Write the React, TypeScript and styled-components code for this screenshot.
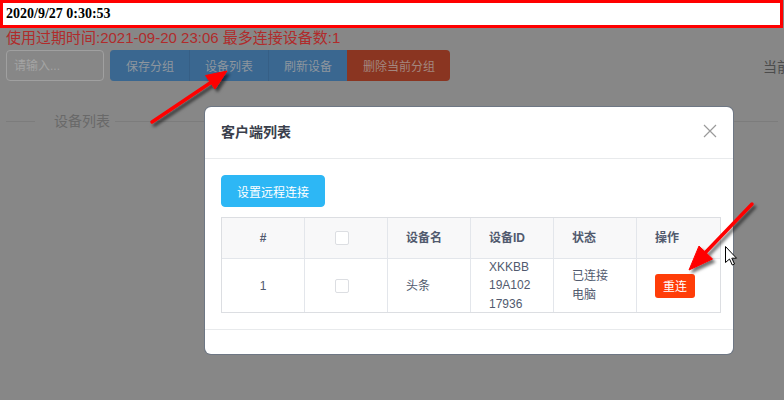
import React from "react";
import styled, { createGlobalStyle } from "styled-components";

const GlobalStyle = createGlobalStyle`
  html, body { margin: 0; padding: 0; }
  body {
    width: 784px;
    height: 400px;
    overflow: hidden;
    background: #878787;
    font-family: "Liberation Sans", "Noto Sans CJK SC", sans-serif;
  }
`;

const Page = styled.div`
  position: relative;
  width: 784px;
  height: 400px;
  overflow: hidden;
`;

const ClockBar = styled.div`
  box-sizing: border-box;
  width: 783px;
  height: 28px;
  border: 3px solid #ff0000;
  background: #ffffff;
  padding-left: 3px;
  font: bold 14px "Liberation Serif", serif;
  line-height: 22px;
  color: #000;
`;

const Main = styled.div`
  padding: 0 6px;
`;

const ExpireText = styled.div`
  font-size: 15px;
  line-height: 20px;
  color: #b02b2b;
  white-space: nowrap;
`;

const Toolbar = styled.div`
  display: flex;
  align-items: center;
  margin-top: 2px;
  height: 31px;
  white-space: nowrap;
`;

const SearchInput = styled.input`
  box-sizing: border-box;
  width: 98px;
  height: 31px;
  margin: 0 6px 0 0;
  padding: 0 7px;
  border: 1px solid #a0a0a0;
  border-radius: 4px;
  background: transparent;
  font: 12px "Liberation Sans", "Noto Sans CJK SC", sans-serif;
  outline: none;
  &::placeholder { color: #a4a4a4; }
`;

const ButtonGroup = styled.div`
  display: flex;
  height: 31px;
`;

const GroupButton = styled.button<{ $tone: "primary" | "danger" }>`
  height: 31px;
  padding: 0 15px;
  border: none;
  border-left: 1px solid ${(p) => (p.$tone === "primary" ? "#365f86" : "#8a3521")};
  background: ${(p) => (p.$tone === "primary" ? "#3a6790" : "#8a3521")};
  color: ${(p) => (p.$tone === "primary" ? "#8e969e" : "#a3877f")};
  font: 12px "Liberation Sans", "Noto Sans CJK SC", sans-serif;
  &:first-child { border-radius: 4px 0 0 4px; border-left-color: #3a6790; }
  &:last-child { border-radius: 0 4px 4px 0; }
`;

const CurrentLabel = styled.span`
  margin-left: 313px;
  font-size: 14px;
  color: #4c4c4c;
`;

const Divider = styled.div`
  display: flex;
  align-items: center;
  margin-top: 30px;
  height: 20px;
  font-size: 14px;
  line-height: 20px;
  color: #696969;
  white-space: nowrap;
`;

const DividerLine = styled.span<{ $grow?: boolean }>`
  display: block;
  height: 0;
  border-top: 1px solid #7c7c7c;
  ${(p) => (p.$grow ? "flex: 1;" : "width: 29px;")}
`;

const DividerText = styled.span`
  margin: 0 5px 0 19px;
`;

const Modal = styled.div`
  position: absolute;
  left: 205px;
  top: 107px;
  width: 528px;
  background: #ffffff;
  border-radius: 6px;
  box-shadow: 0 0 0 1px #6e7784;
`;

const ModalHeader = styled.div`
  position: relative;
  padding: 15px 16px 16px;
  border-bottom: 1px solid #e8eaec;
`;

const ModalTitle = styled.div`
  font-size: 14px;
  line-height: 20px;
  font-weight: bold;
  color: #3a3f4c;
`;

const CloseIcon = styled.svg`
  position: absolute;
  right: 16px;
  top: 17px;
`;

const ModalBody = styled.div`
  padding: 16px;
`;

const InfoButton = styled.button`
  height: 32px;
  padding: 0 15px;
  border: 1px solid #2db7f5;
  border-radius: 4px;
  background: #2db7f5;
  color: #ffffff;
  font: 12px "Liberation Sans", "Noto Sans CJK SC", sans-serif;
`;

const Table = styled.div`
  box-sizing: border-box;
  width: 500px;
  margin-top: 10px;
  display: grid;
  grid-template-columns: repeat(6, 83px);
  border: 1px solid #dcdee2;
`;

const Cell = styled.div<{ $head?: boolean; $align?: "left" | "center"; $last?: boolean }>`
  box-sizing: border-box;
  display: flex;
  align-items: center;
  justify-content: ${(p) => (p.$align === "left" ? "flex-start" : "center")};
  padding: ${(p) => (p.$align === "left" ? "0 0 0 18px" : "0")};
  height: ${(p) => (p.$head ? "41px" : "53px")};
  border-right: ${(p) => (p.$last ? "none" : "1px solid #e3e6eb")};
  border-bottom: ${(p) => (p.$head ? "1px solid #e3e6eb" : "none")};
  background: ${(p) => (p.$head ? "#f8f8f9" : "#ffffff")};
  font-size: 12px;
  line-height: 18px;
  font-weight: ${(p) => (p.$head ? "bold" : "normal")};
  color: #515a6e;
`;

const Lines = styled.div`
  display: flex;
  flex-direction: column;
  line-height: 18.5px;
`;

const CheckBox = styled.span`
  box-sizing: border-box;
  display: inline-block;
  width: 14px;
  height: 14px;
  margin-right: 8px;
  border: 1px solid #dcdee2;
  border-radius: 2px;
  background: #ffffff;
`;

const SmallDangerButton = styled.button`
  height: 24px;
  padding: 0 8px;
  border: none;
  border-radius: 3px;
  background: #ff3d08;
  color: #ffffff;
  font: 12px "Liberation Sans", "Noto Sans CJK SC", sans-serif;
`;

const ModalFooter = styled.div`
  height: 24px;
  border-top: 1px solid #e8eaec;
`;

const Annotations = styled.svg`
  position: absolute;
  left: 0;
  top: 0;
  pointer-events: none;
`;

const headers = ["#", "", "设备名", "设备ID", "状态", "操作"];

export default function App() {
  return (
    <Page>
      <GlobalStyle />
      <ClockBar>2020/9/27 0:30:53</ClockBar>
      <Main>
        <ExpireText>使用过期时间:2021-09-20 23:06 最多连接设备数:1</ExpireText>
        <Toolbar>
          <SearchInput placeholder="请输入..." />
          <ButtonGroup>
            <GroupButton $tone="primary">保存分组</GroupButton>
            <GroupButton $tone="primary">设备列表</GroupButton>
            <GroupButton $tone="primary">刷新设备</GroupButton>
            <GroupButton $tone="danger">删除当前分组</GroupButton>
          </ButtonGroup>
          <CurrentLabel>当前分组：默认</CurrentLabel>
        </Toolbar>
        <Divider>
          <DividerLine />
          <DividerText>设备列表</DividerText>
          <DividerLine $grow />
        </Divider>
      </Main>

      <Modal>
        <ModalHeader>
          <ModalTitle>客户端列表</ModalTitle>
          <CloseIcon width="14" height="14" viewBox="0 0 14 14">
            <path d="M1 1 L13 13 M13 1 L1 13" stroke="#9a9a9a" strokeWidth="1.2" fill="none" />
          </CloseIcon>
        </ModalHeader>
        <ModalBody>
          <InfoButton>设置远程连接</InfoButton>
          <Table>
            {headers.map((h, i) => (
              <Cell key={i} $head $align={i === 0 || i === 1 ? "center" : "left"} $last={i === 5}>
                {i === 1 ? <CheckBox /> : h}
              </Cell>
            ))}
            <Cell>1</Cell>
            <Cell>
              <CheckBox />
            </Cell>
            <Cell $align="left">头条</Cell>
            <Cell $align="left">
              <Lines>
                <span>XKKBB</span>
                <span>19A102</span>
                <span>17936</span>
              </Lines>
            </Cell>
            <Cell $align="left">
              <Lines>
                <span>已连接</span>
                <span>电脑</span>
              </Lines>
            </Cell>
            <Cell $align="left" $last>
              <SmallDangerButton>重连</SmallDangerButton>
            </Cell>
          </Table>
        </ModalBody>
        <ModalFooter />
      </Modal>

      <Annotations width="784" height="400" viewBox="0 0 784 400">
        <defs>
          <filter id="shadow" x="-20%" y="-20%" width="140%" height="140%">
            <feDropShadow dx="2.5" dy="3" stdDeviation="1.6" floodColor="#000" floodOpacity="0.55" />
          </filter>
        </defs>
        <g filter="url(#shadow)" fill="#ff0000" stroke="#ff0000">
          <line x1="152" y1="122" x2="213" y2="81" strokeWidth="3.5" strokeLinecap="round" />
          <polygon points="227,71 215,89 205.5,75.5" strokeWidth="1" strokeLinejoin="round" />
          <line x1="752" y1="204" x2="703" y2="255" strokeWidth="3.5" strokeLinecap="round" />
          <polygon points="689,270 712.5,259 699,246" strokeWidth="1" strokeLinejoin="round" />
        </g>
        <path
          d="M725.5 246.5 L725.5 262.5 L729.5 259 L732.3 265 L734.5 264 L731.8 258.2 L736.5 258.2 Z"
          fill="#ffffff"
          stroke="#000000"
          strokeWidth="1"
          strokeLinejoin="miter"
        />
      </Annotations>
    </Page>
  );
}
